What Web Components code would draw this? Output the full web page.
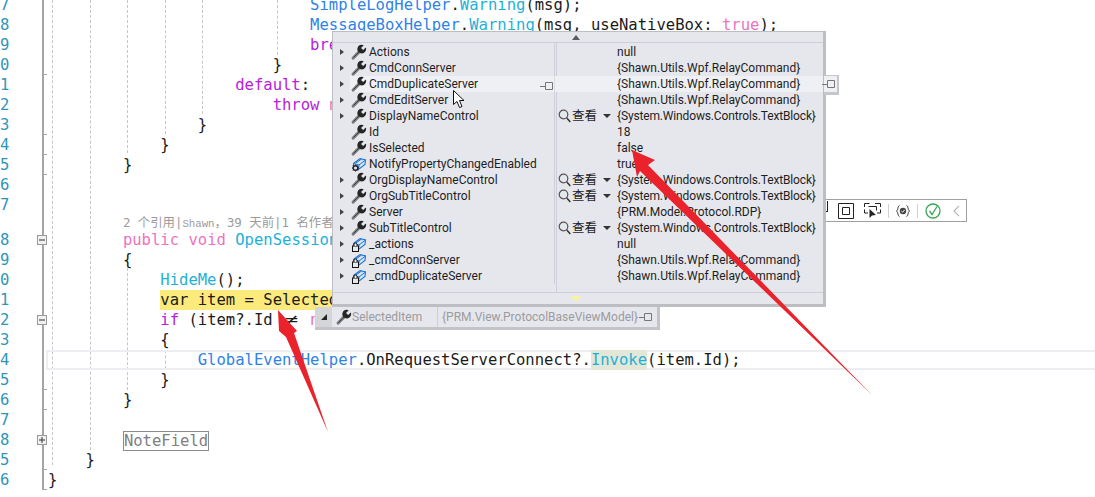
<!DOCTYPE html>
<html>
<head>
<meta charset="utf-8">
<style>
  html, body { margin: 0; background: #fff; height: 497px; overflow: hidden; }
  body { position: relative; font-family: Roboto, "Noto Sans CJK SC", sans-serif; }
</style>
</head>
<body>
<vs-editor>
  <code-line num="7" col="28"><span class="type">SimpleLogHelper</span>.<span class="fn">Warning</span>(msg);</code-line>
  <code-line num="8" col="28"><span class="type">MessageBoxHelper</span>.<span class="fn">Warning</span>(msg, useNativeBox: <span class="kw">true</span>);</code-line>
  <code-line num="9" col="28"><span class="ctl">bre</span></code-line>
  <code-line num="0" col="24" tick>}</code-line>
  <code-line num="1" col="20"><span class="ctl">default</span>:</code-line>
  <code-line num="2" col="24"><span class="ctl">throw</span> <span class="kw">n</span></code-line>
  <code-line num="3" col="16" tick>}</code-line>
  <code-line num="4" col="12" tick>}</code-line>
  <code-line num="5" col="8" tick>}</code-line>
  <code-line num="6"></code-line>
  <code-line num="7"></code-line>
  <code-lens col="8">2 个引用|<span>Shawn</span>，39 天前|1 名作者</code-lens>
  <code-line num="8" col="8" fold="minus"><span class="kw">public</span> <span class="kw">void</span> <span class="fn">OpenSession</span></code-line>
  <code-line num="9" col="8">{</code-line>
  <code-line num="0" col="12"><span class="fn">HideMe</span>();</code-line>
  <code-line num="1" col="12"><span class="hl">var item = Selected</span></code-line>
  <code-line num="2" col="12" fold="minus"><span class="ctl">if</span> (item?.Id <span class="lig">≠</span> <span class="kw">n</span></code-line>
  <code-line num="3" col="12">{</code-line>
  <code-line num="4" col="16" current><span class="type">GlobalEventHelper</span>.OnRequestServerConnect?.<span class="ref">Invoke</span>(item.Id);</code-line>
  <code-line num="5" col="12" tick>}</code-line>
  <code-line num="6" col="8" tick>}</code-line>
  <code-line num="7"></code-line>
  <code-line num="8" col="8" fold="plus"><span class="collapsed">NoteField</span></code-line>
  <code-line num="5" col="4" tick>}</code-line>
  <code-line num="6" col="0" tick>}</code-line>
</vs-editor>

<debug-toolbar></debug-toolbar>
<data-tip-strip name="SelectedItem" value="{PRM.View.ProtocolBaseViewModel}"></data-tip-strip>

<debug-popup>
  <debug-row icon="wrench" expand><span slot="name">Actions</span><span slot="value">null</span></debug-row>
  <debug-row icon="wrench" expand><span slot="name">CmdConnServer</span><span slot="value">{Shawn.Utils.Wpf.RelayCommand}</span></debug-row>
  <debug-row icon="wrench" expand hover><span slot="name">CmdDuplicateServer</span><span slot="value">{Shawn.Utils.Wpf.RelayCommand}</span></debug-row>
  <debug-row icon="wrench" expand><span slot="name">CmdEditServer</span><span slot="value">{Shawn.Utils.Wpf.RelayCommand}</span></debug-row>
  <debug-row icon="wrench" expand viewer><span slot="name">DisplayNameControl</span><span slot="value">{System.Windows.Controls.TextBlock}</span></debug-row>
  <debug-row icon="wrench"><span slot="name">Id</span><span slot="value">18</span></debug-row>
  <debug-row icon="wrench"><span slot="name">IsSelected</span><span slot="value">false</span></debug-row>
  <debug-row icon="gear"><span slot="name">NotifyPropertyChangedEnabled</span><span slot="value">true</span></debug-row>
  <debug-row icon="wrench" expand viewer><span slot="name">OrgDisplayNameControl</span><span slot="value">{System.Windows.Controls.TextBlock}</span></debug-row>
  <debug-row icon="wrench" expand viewer><span slot="name">OrgSubTitleControl</span><span slot="value">{System.Windows.Controls.TextBlock}</span></debug-row>
  <debug-row icon="wrench" expand><span slot="name">Server</span><span slot="value">{PRM.Model.Protocol.RDP}</span></debug-row>
  <debug-row icon="wrench" expand viewer><span slot="name">SubTitleControl</span><span slot="value">{System.Windows.Controls.TextBlock}</span></debug-row>
  <debug-row icon="lock" expand><span slot="name">_actions</span><span slot="value">null</span></debug-row>
  <debug-row icon="lock" expand><span slot="name">_cmdConnServer</span><span slot="value">{Shawn.Utils.Wpf.RelayCommand}</span></debug-row>
  <debug-row icon="lock" expand><span slot="name">_cmdDuplicateServer</span><span slot="value">{Shawn.Utils.Wpf.RelayCommand}</span></debug-row>
</debug-popup>

<red-arrows></red-arrows>

<script>
const MONO = `"DejaVu Sans Mono", "Noto Sans CJK SC", monospace`;

const WRENCH = `<svg width="16" height="16" viewBox="0 0 16 16">
  <path d="M2.200 14 8.600 7.400" stroke="#7c7c7c" stroke-width="3.200" stroke-linecap="round"/>
  <path d="M2.600 13.400 8.600 7.400" stroke="#444" stroke-width="1"/>
  <path d="M12.800 1.200A4.400 4.400 0 1 0 14.800 3.400L12.200 5.900 10 4Z" fill="#262626"/>
</svg>`;

const FIELD = `<path d="M2.500 7.500 9 2.500l5.500 1.500-.5 4.500-6.500 5-5-1.500Z" fill="#d5e4f4" stroke="#1c72c4" stroke-width="1.100"/>
  <path d="M2.500 7.500 8 9l6.500-5M8 9l-.5 4.500M5 7l5.500-4" fill="none" stroke="#1c72c4"/>`;

const ICONS = {
  wrench: WRENCH,
  lock: `<svg width="16" height="16" viewBox="0 0 16 16">${FIELD}
    <rect x="1.500" y="10" width="6" height="5.500" fill="#e6e7ed" stroke="#111"/>
    <path d="M3 10V8.500a1.500 1.500 0 0 1 3 0V10" fill="#e6e7ed" stroke="#111"/></svg>`,
  gear: `<svg width="16" height="16" viewBox="0 0 16 16">${FIELD}
    <circle cx="4.500" cy="12" r="2.300" fill="#e6e7ed" stroke="#222" stroke-width="1.400"/>
    <path d="M4.500 8.500v1.200M4.500 14.300v1.200M1 12h1.200M6.800 12H8M2 9.500l.8.800M6.200 13.700l.8.800M7 9.500l-.8.800M2.800 13.700l-.8.800" stroke="#222"/></svg>`
};

const PIN = `<svg width="14" height="10" viewBox="0 0 14 10"><path d="M0 5.500h5M5.500 1.500h7v7h-7Z" fill="none" stroke="#777"/></svg>`;

class VsEditor extends HTMLElement {
  constructor() {
    super();
    this.attachShadow({ mode: 'open' });
  }

  connectedCallback() {
    // x, from, to
    const guides = [[52, 0, 465], [90, 0, 450], [127, 0, 153], [127, 268, 390], [165, 0, 134], [165, 350, 369], [202, 0, 114], [277, 0, 55]];
    this.shadowRoot.innerHTML = `
      <style>
        :host { display: block; position: relative; margin-top: -5px; height: 502px; overflow: hidden;
          font-family: ${MONO}; font-size: 15.55px; color: #1b1b1b; }
        .guide { position: absolute; width: 0; border-left: 1px dashed #c6c6c6; }
      </style>
      ${guides.map(g => `<i class="guide" style="left:${g[0]}px;top:${g[1] + 5}px;height:${g[2] - g[1]}px"></i>`).join('')}
      <slot></slot>`;
  }
}

class CodeLine extends HTMLElement {
  constructor() {
    super();
    this.attachShadow({ mode: 'open' });
  }

  connectedCallback() {
    const col = +(this.getAttribute('col') || 0);
    const fold = this.getAttribute('fold');
    this.shadowRoot.innerHTML = `
      <style>
        :host { display: flex; position: relative; height: 20px; line-height: 20px; white-space: pre; }
        :host([tick]) .gutter::after { content: ""; position: absolute; left: 42px; bottom: 0; width: 5px; height: 1px; background: #a5a5a5; }
        :host([current])::before { content: ""; position: absolute; left: 46px; right: -4px; top: 0; bottom: 0; border: 2px solid #eeeef2; }
        .gutter { flex: none; position: relative; width: 48px; color: #2f96b8; }
        .gutter::before { content: ""; position: absolute; left: 42px; top: 0; bottom: 0; width: 1.500px; background: #a5a5a5; }
        .fold { position: absolute; left: 37px; top: 5px; width: 8px; height: 8px; border: 1px solid #9a9a9a; background: #f0f0f0; z-index: 1;
          display: flex; align-items: center; justify-content: center; }
        .fold svg { display: block; }
        .code { position: relative; padding-left: ${col * 9.36}px; }
        ::slotted(.type) { color: #2f82e6; }
        ::slotted(.fn) { color: #1eb1d6; }
        ::slotted(.ref) { color: #1eb1d6; background: #e3e7d8; display: inline-block; }
        ::slotted(.kw) { color: #ee73bf; }
        ::slotted(.ctl) { color: #b820dc; }
        ::slotted(.hl) { background: #fdea7c; display: inline-block; }
        ::slotted(.lig) { display: inline-block; width: 18.720px; text-align: center; transform: scaleX(1.400); }
        ::slotted(.collapsed) { color: #808080; outline: 1px solid #8c8c8c; outline-offset: -1px; display: inline-block; height: 20px; line-height: 20px; margin-top: 1px; padding: 0 1px; }
      </style>
      <div class="gutter">${this.getAttribute('num') || ''}${fold ? `<span class="fold"><svg width="6" height="6" viewBox="0 0 6 6"><path d="${fold === 'plus' ? 'M0 3h6M3 0v6' : 'M0 3h6'}" stroke="#333"/></svg></span>` : ''}</div>
      <div class="code"><slot></slot></div>`;
  }
}

class CodeLens extends HTMLElement {
  constructor() {
    super();
    this.attachShadow({ mode: 'open' });
  }

  connectedCallback() {
    const col = +(this.getAttribute('col') || 0);
    this.shadowRoot.innerHTML = `
      <style>
        :host { display: flex; height: 15px; line-height: 15px; font-size: 12.400px; color: #9b9b9b; white-space: pre; }
        .gutter { flex: none; position: relative; width: 48px; }
        .gutter::before { content: ""; position: absolute; left: 42px; top: 0; bottom: 0; width: 1.500px; background: #a5a5a5; }
        .code { padding-left: ${col * 9.36}px; }
        ::slotted(span) { font-family: "Liberation Mono", monospace; font-size: 10.700px; }
      </style>
      <div class="gutter"></div>
      <div class="code"><slot></slot></div>`;
  }
}

class DebugPopup extends HTMLElement {
  constructor() {
    super();
    this.attachShadow({ mode: 'open' });
  }

  connectedCallback() {
    this.shadowRoot.innerHTML = `
      <style>
        :host { display: flex; flex-direction: column; position: absolute; left: 332px; top: 31px; width: 490px; height: 272px;
          background: #e6e7ed; border: solid #bdbec2; border-width: 1px 3px 3px 1px; color: #1e1e1e;
          font-size: 12px; font-family: Roboto, "Noto Sans CJK SC", sans-serif; }
        .bar { flex: none; display: flex; align-items: center; padding-left: 239px; }
        .top { height: 10px; border-bottom: 1px solid #cdced9; }
        .bottom { height: 11px; border-top: 1px solid #cdced9; }
        .up { border: 4px solid transparent; border-top: 0; border-bottom: 5px solid #5a5a5a; }
        .down { border: 6px solid transparent; border-bottom: 0; border-top: 6px solid #f6f1a8; margin-left: -2px; }
        .rows { flex: 1; padding-top: 1px; background: linear-gradient(#cdced9, #cdced9) 222.500px 0 / 1px 100% no-repeat; }
      </style>
      <div class="bar top"><i class="up"></i></div>
      <div class="rows"><slot></slot></div>
      <div class="bar bottom"><i class="down"></i></div>`;
  }
}

class DebugRow extends HTMLElement {
  constructor() {
    super();
    this.attachShadow({ mode: 'open' });
  }

  connectedCallback() {
    const icon = ICONS[this.getAttribute('icon')];
    const hover = this.hasAttribute('hover');
    const expand = this.hasAttribute('expand');
    const viewer = this.hasAttribute('viewer');
    this.shadowRoot.innerHTML = `
      <style>
        :host { display: flex; position: relative; height: 16px; line-height: 16px; white-space: pre; }
        :host([viewer]) ::slotted([slot=value]) { letter-spacing: -.15px; }
        .arrow { flex: none; width: 17px; display: flex; align-items: center; padding-left: 7px; box-sizing: border-box; }
        .arrow i { border: 3.500px solid transparent; border-left: 4px solid #444; border-right: 0; }
        .main { flex: 1; display: flex; min-width: 0; }
        :host([hover]) .main { background: #eff0f3; }
        .icon { flex: none; width: 19px; height: 16px; padding-left: 1px; box-sizing: border-box; }
        .icon svg { display: block; }
        .name { flex: 1; position: relative; }
        .pin { position: absolute; right: 0; top: 3px; }
        .name-col { flex: none; width: 205px; display: flex; border-right: 1px solid #cdced9; box-sizing: border-box; }
        :host([hover]) .name-col { border-right-color: #dcdde4; }
        .viewer { flex: none; width: 62px; display: flex; align-items: center; }
        .glass { flex: none; margin-left: 3px; width: 13px; height: 14px; }
        .look { font-size: 12.500px; margin-left: 1px; }
        .drop { margin-left: 6px; border: 4px solid transparent; border-top: 4px solid #333; border-bottom: 0; }
        .ext { position: absolute; left: 491px; top: -1px; width: 13px; height: 16px; background: #eff0f3; border: solid #c6c7cb; border-width: 1px 2px 3px 0; }
        .ext svg { position: absolute; left: -2px; top: 3px; }
      </style>
      <div class="arrow">${expand ? '<i></i>' : ''}</div>
      <div class="main">
        <div class="name-col">
          <div class="icon">${icon}</div>
          <div class="name"><slot name="name"></slot>${hover ? `<span class="pin">${PIN}</span>` : ''}</div>
        </div>
        <div class="viewer">${viewer ? `
          <svg class="glass" viewBox="0 0 13 14"><circle cx="5.500" cy="5.500" r="4.300" fill="none" stroke="#555" stroke-width="1.200"/><path d="M8.800 9l3.500 4" stroke="#333" stroke-width="1.500"/></svg>
          <span class="look">查看</span><i class="drop"></i>` : ''}</div>
        <div class="value"><slot name="value"></slot></div>
      </div>
      ${hover ? `<div class="ext">${PIN}</div>` : ''}`;
  }
}

class DataTipStrip extends HTMLElement {
  constructor() {
    super();
    this.attachShadow({ mode: 'open' });
  }

  connectedCallback() {
    this.shadowRoot.innerHTML = `
      <style>
        :host { display: flex; align-items: center; position: absolute; left: 315px; top: 307px; width: 342px; height: 20px;
          background: #e6e7ed; border: solid #c3c4c8; border-width: 0 3px 3px 0; font-size: 12px; color: #9b9b9f; white-space: pre;
          font-family: Roboto, "Noto Sans CJK SC", sans-serif; }
        .left { flex: none; width: 17px; height: 100%; background: #d4d5d9; display: flex; align-items: center; justify-content: center; }
        .left i { border: solid transparent; border-width: 0 0 6px 6px; border-bottom-color: #222; }
        .icon { flex: none; width: 20px; padding-left: 4px; box-sizing: border-box; height: 16px; }
        .icon svg { display: block; }
        .name { flex: none; width: 86px; border-right: 1px solid #cdced9; height: 100%; line-height: 20px; box-sizing: border-box; }
        .value { flex: 1; padding-left: 4px; line-height: 20px; }
        .pin { flex: none; margin-right: 4px; display: flex; }
      </style>
      <div class="left"><i></i></div>
      <div class="icon">${WRENCH}</div>
      <div class="name">${this.getAttribute('name')}</div>
      <div class="value">${this.getAttribute('value')}</div>
      <span class="pin">${PIN}</span>`;
  }
}

class DebugToolbar extends HTMLElement {
  constructor() {
    super();
    this.attachShadow({ mode: 'open' });
  }

  connectedCallback() {
    this.shadowRoot.innerHTML = `
      <style>
        :host { display: flex; align-items: center; position: absolute; left: 815px; top: 199px; width: 150px; height: 21px;
          background: #fff; border: 1px solid #a0a0a0; box-sizing: content-box; }
        .cut { flex: none; width: 12px; height: 11px; margin-top: -9px; border: solid #222; border-width: 0 1px 1px 0; box-sizing: border-box; }
        svg { display: block; flex: none; }
        .sep { flex: none; width: 1px; height: 14px; background: #d0d0d0; }
      </style>
      <i class="cut"></i>
      <svg style="margin-left:10px" width="16" height="16" viewBox="0 0 16 16"><path d="M.500.500h15v15H.500ZM4.500 4.500h7v7h-7Z" fill="none" stroke="#222"/></svg>
      <svg style="margin-left:10px" width="17" height="16" viewBox="0 0 17 16"><path d="M.500 4V.500h5M11 .500h5.500V4M.500 6.500V10H4M16.500 6.500V10H13M4.500 3.500h8v4" fill="none" stroke="#222"/><path d="M5.500 6l0 9 2.500-2.500 4-.5Z" fill="#222"/></svg>
      <i class="sep" style="margin-left:7px"></i>
      <svg style="margin-left:7px" width="14" height="12" viewBox="0 0 14 12"><path d="M3.500.500C1.500.500 2.500 5 .500 6 2.500 7 1.500 11.500 3.500 11.500M10.500.500C12.500.500 11.500 5 13.500 6 11.500 7 12.500 11.500 10.500 11.500" fill="none" stroke="#444"/><circle cx="7" cy="6" r="3.200" fill="#444"/><path d="M5.500 6.200l1.200 1 2-2.400" fill="none" stroke="#fff"/></svg>
      <i class="sep" style="margin-left:7px"></i>
      <svg style="margin-left:7px" width="16" height="16" viewBox="0 0 16 16"><circle cx="8" cy="8" r="7" fill="#fff" stroke="#3aa655" stroke-width="1.300"/><path d="M4.500 8l2.500 3.500L12 3.500" fill="none" stroke="#3aa655" stroke-width="1.300"/></svg>
      <svg style="margin-left:12px" width="7" height="12" viewBox="0 0 7 12"><path d="M6 .800 1 6l5 5.200" fill="none" stroke="#b5b5b5" stroke-width="1.200"/></svg>`;
  }
}

class RedArrows extends HTMLElement {
  constructor() {
    super();
    this.attachShadow({ mode: 'open' });
  }

  connectedCallback() {
    this.shadowRoot.innerHTML = `
      <style>
        :host { position: absolute; inset: 0; pointer-events: none; }
        svg { display: block; }
      </style>
      <svg width="1095" height="497" viewBox="0 0 1095 497">
        <path d="M453.500 90.500v14l3.500-3 2.500 6 2.500-1-2.500-6h4.500Z" fill="#fff" stroke="#111"/>
        <path d="M278 310 297 331 294 333 328 432 286 337 279 331Z" fill="#e9222b"/>
        <path d="M632 150 655 160 648 165 872 395 640 171 637 177Z" fill="#e9222b"/>
      </svg>`;
  }
}

customElements.define('vs-editor', VsEditor);
customElements.define('code-line', CodeLine);
customElements.define('code-lens', CodeLens);
customElements.define('debug-popup', DebugPopup);
customElements.define('debug-row', DebugRow);
customElements.define('data-tip-strip', DataTipStrip);
customElements.define('debug-toolbar', DebugToolbar);
customElements.define('red-arrows', RedArrows);
</script>
</body>
</html>
